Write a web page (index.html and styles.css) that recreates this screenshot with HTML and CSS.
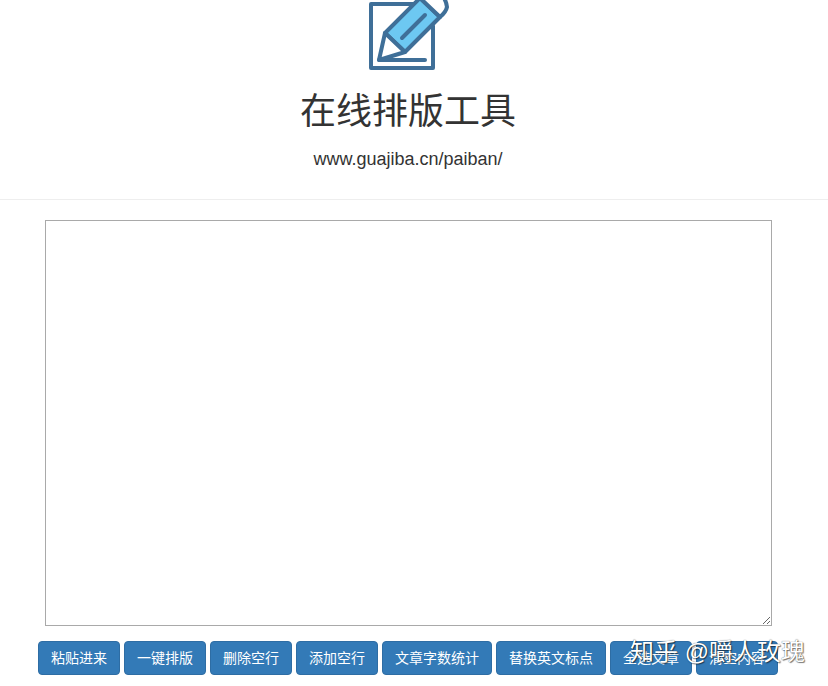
FILE: index.html
```html
<!DOCTYPE html>
<html lang="zh-CN">
<head>
    <meta charset="UTF-8">
    <title>在线排版工具</title>
    <link rel="stylesheet" href="styles.css">
</head>
<body>
    <header class="jumbotron">
        <svg class="logo" width="80" height="72" viewBox="0 0 80 72">
            <path d="M54 4H3V68H65V26" fill="#fff" stroke="#3f6f98" stroke-width="4" stroke-linejoin="round" stroke-linecap="round"/>
            <path d="M17 33L52 -2 72 17 37 52Z" fill="#6dc8f2" stroke="#3f6f98" stroke-width="4" stroke-linejoin="round"/>
            <path d="M34 38L57 15" fill="none" stroke="#3f6f98" stroke-width="4" stroke-linecap="round"/>
            <path d="M17 33L11 60 37 52Z" fill="#fff" stroke="#3f6f98" stroke-width="4" stroke-linejoin="round"/>
            <path d="M52 -2L60 -10H68Q78 -3 79 7 78 12 72 17Z" fill="#fff" stroke="#3f6f98" stroke-width="4" stroke-linejoin="round"/>
            <path d="M11 60H57" fill="none" stroke="#3f6f98" stroke-width="4" stroke-linecap="round"/>
        </svg>
        <h1>在线排版工具</h1>
        <p>www.guajiba.cn/paiban/</p>
    </header>
    <hr>
    <main class="editor">
        <textarea class="content"></textarea>
        <div class="toolbar">
            <button class="btn">粘贴进来</button>
            <button class="btn">一键排版</button>
            <button class="btn">删除空行</button>
            <button class="btn">添加空行</button>
            <button class="btn">文章字数统计</button>
            <button class="btn">替换英文标点</button>
            <button class="btn">全选文章</button>
            <button class="btn">清空内容</button>
        </div>
    </main>
    <div class="watermark">知乎 @嚼人玫瑰</div>
</body>
</html>
```

FILE: styles.css
```css
html, body {
    height: 100%;
}
body {
    margin: 0;
    overflow: hidden;
    background: #fff;
    color: #333;
    font-family: "Liberation Sans", "Noto Sans CJK SC", sans-serif;
    font-size: 14px;
}
.jumbotron {
    width: 816px;
    height: 199px;
    text-align: center;
    overflow: hidden;
}
.logo {
    display: block;
    margin: 0 auto;
    overflow: visible;
}
.jumbotron h1 {
    margin: 20px 0 0;
    font-size: 36px;
    font-weight: 400;
    line-height: 40px;
}
.jumbotron p {
    margin: 15px 0 0;
    font-size: 18px;
    line-height: 24px;
}
hr {
    margin: 0;
    border: 0;
    border-top: 1px solid #eee;
}
.editor {
    width: 816px;
    padding-top: 20px;
}
.content {
    display: block;
    box-sizing: border-box;
    width: 727px;
    height: 406px;
    margin: 0 0 15px 45px;
    border: 1px solid #a9a9a9;
    padding: 2px;
}
.toolbar {
    display: flex;
    justify-content: center;
    gap: 4px;
}
.btn {
    padding: 6px 12px;
    height: 34px;
    border: 1px solid #2e6da4;
    border-radius: 4px;
    background: #337ab7;
    color: #fff;
    font-family: inherit;
    font-size: 14px;
    line-height: 20px;
    cursor: pointer;
}
.watermark {
    position: absolute;
    left: 630px;
    top: 637px;
    color: #fff;
    font-size: 24px;
    line-height: 30px;
    text-shadow: 0 0 1px rgba(0,0,0,0.7), 1px 1px 1px rgba(0,0,0,0.5);
    white-space: nowrap;
}
```
